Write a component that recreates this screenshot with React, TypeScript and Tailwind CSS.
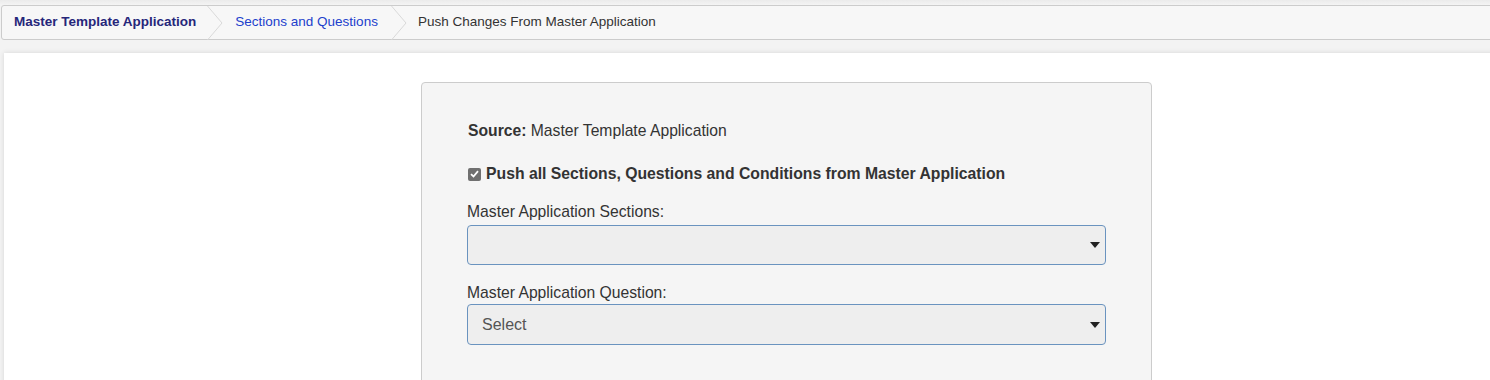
import React from "react";

function Chevron() {
  return (
    <svg width="16" height="34" viewBox="0 0 16 34" className="shrink-0 block">
      <polyline points="0.5,0 15,17 0.5,34" fill="none" stroke="#d9d9d9" strokeWidth="1" />
    </svg>
  );
}

function Caret() {
  return (
    <svg width="10" height="6" viewBox="0 0 10 6" className="block">
      <polygon points="0,0 10,0 5,6" fill="#222" />
    </svg>
  );
}

export default function App() {
  return (
    <div
      className="w-[1490px] h-[380px] overflow-hidden bg-[#f3f3f3]"
      style={{ fontFamily: '"Liberation Sans", Arial, sans-serif' }}
    >
      <div className="h-[5px] bg-gradient-to-b from-[#ebebeb] to-[#f4f4f4]" />
      <div className="ml-[1px] w-[1500px] h-[35px] border border-[#cccccc] rounded-l-[3px] bg-[#f7f7f7] flex items-center text-[13.5px]">
        <span className="pl-[12px] pr-[11px] font-bold text-[#26267a]">Master Template Application</span>
        <Chevron />
        <span className="pl-[12px] pr-[13px] text-[#2140cc]">Sections and Questions</span>
        <Chevron />
        <span className="pl-[11px] text-[#333333]">Push Changes From Master Application</span>
      </div>
      <div className="h-[13px]" />
      <div className="ml-[4px] w-[1500px] h-[340px] bg-white shadow-[0_0_5px_rgba(0,0,0,0.12)] pt-[29px]">
        <div className="ml-[417px] w-[731px] h-[320px] border border-[#cccccc] rounded-[4px] bg-[#f5f5f5] pl-[45px] pr-[45px] pt-[38px] text-[#333333]">
          <div className="pl-[1px] text-[15.7px] leading-[20px]">
            <span className="font-bold">Source:</span> Master Template Application
          </div>
          <div className="mt-[22px] flex items-center gap-[5px] text-[15.75px] leading-[22px] font-bold">
            <span className="ml-[1px] w-[13px] h-[13px] rounded-[2px] bg-[#707070] flex items-center justify-center">
              <svg width="9" height="8" viewBox="0 0 9 8">
                <polyline points="1,4.2 3.5,6.5 8,1.2" fill="none" stroke="#fff" strokeWidth="1.8" />
              </svg>
            </span>
            <span>Push all Sections, Questions and Conditions from Master Application</span>
          </div>
          <div className="mt-[17px] text-[15.7px] leading-[20px]">Master Application Sections:</div>
          <div className="mt-[3px] w-[639px] h-[40px] border border-[#6a93bf] rounded-[4px] bg-[#eeeeee] flex items-center justify-end pr-[5px]">
            <Caret />
          </div>
          <div className="mt-[18px] text-[15.7px] leading-[20px]">Master Application Question:</div>
          <div className="mt-[1px] w-[639px] h-[41px] border border-[#6a93bf] rounded-[4px] bg-[#eeeeee] flex items-center justify-between pl-[14px] pr-[5px] text-[16px] text-[#555555]">
            <span>Select</span>
            <Caret />
          </div>
        </div>
      </div>
    </div>
  );
}
